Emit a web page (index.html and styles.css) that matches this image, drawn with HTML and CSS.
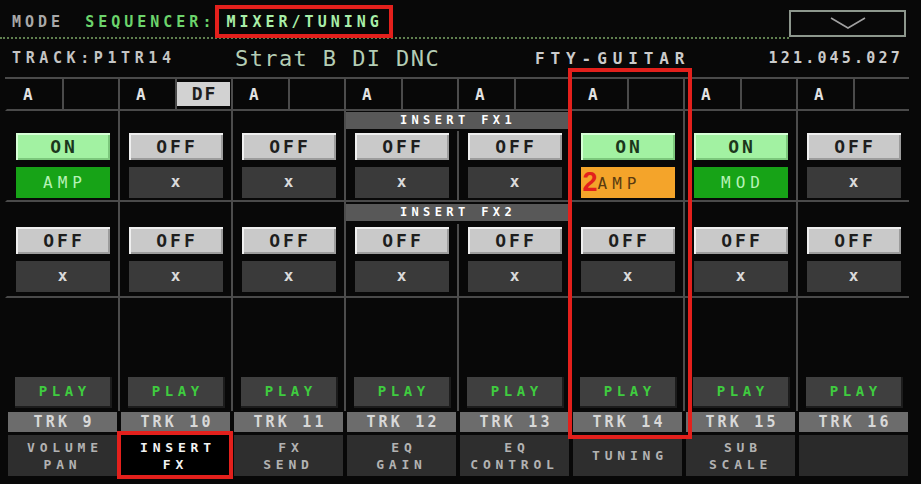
FILE: index.html
```html
<!DOCTYPE html>
<html lang="en">
<head>
    <meta charset="UTF-8">
    <meta name="viewport" content="width=device-width, initial-scale=1.0">
    <title>Mixer/Tuning - Insert FX</title>
    <link rel="stylesheet" href="styles.css">
</head>
<body>
    <div class="screen">
        <div class="mode-bar">
            <div class="mode-line">
                <span class="mode-label">MODE</span>
                <span class="mode-seq">SEQUENCER:</span>
                <span class="mode-page">MIXER/TUNING</span>
            </div>
            <div class="dropdown">
                <svg width="36" height="13" viewBox="0 0 36 13">
                    <polyline points="1,1 18,11 35,1" fill="none" stroke="#a0a0a0" stroke-width="1.6"/>
                </svg>
            </div>
        </div>
        <div class="track-bar">
            <span class="track-id">TRACK:P1TR14</span>
            <span class="track-sound">Strat B DI DNC</span>
            <span class="track-bank">FTY-GUITAR</span>
            <span class="track-num">121.045.027</span>
        </div>
        <div class="mixer" id="mixer"></div>
        <div class="trk-row" id="trk-row"></div>
        <div class="tabs">
            <div class="tab">VOLUME<br>PAN</div>
            <div class="tab active">INSERT<br>FX</div>
            <div class="tab">FX<br>SEND</div>
            <div class="tab">EQ<br>GAIN</div>
            <div class="tab">EQ<br>CONTROL</div>
            <div class="tab">TUNING</div>
            <div class="tab">SUB<br>SCALE</div>
            <div class="tab blank"></div>
        </div>
        <div class="mark mark-page"></div>
        <div class="mark mark-track"></div>
        <div class="mark mark-tab"></div>
    </div>
    <script>
        const tracks = [
            { num: 9,  df: false, fx1: ["ON",  "AMP", "green"] },
            { num: 10, df: true,  fx1: ["OFF", "x",   "empty"] },
            { num: 11, df: false, fx1: ["OFF", "x",   "empty"] },
            { num: 12, df: false, fx1: ["OFF", "x",   "empty"] },
            { num: 13, df: false, fx1: ["OFF", "x",   "empty"] },
            { num: 14, df: false, fx1: ["ON",  "AMP", "orange"], note: "2" },
            { num: 15, df: false, fx1: ["ON",  "MOD", "green"] },
            { num: 16, df: false, fx1: ["OFF", "x",   "empty"] }
        ];
        const fx2 = ["OFF", "x", "empty"];

        const mixer = document.getElementById("mixer");

        function cell(i, cls, html) {
            let d = document.createElement("div");
            d.className = "cell " + cls + (i === 0 ? " first" : "");
            d.innerHTML = html || "";
            mixer.appendChild(d);
        }

        function slot(fx, note) {
            let sw = fx[0] === "ON" ? "on" : "off";
            let label = note ? '<span class="note">' + note + '</span>' + fx[1] : fx[1];
            return '<div class="sw ' + sw + '">' + fx[0] + '</div>' +
                   '<div class="fx ' + fx[2] + '">' + label + '</div>';
        }

        function headerRow(label, cls) {
            for (let i = 0; i < 8; i++) {
                if (i === 4) continue;
                if (i === 3) {
                    cell(i, "head-cell", '<div class="fx-head ' + cls + '">' + label + '</div>');
                } else {
                    cell(i, "");
                }
            }
        }

        tracks.forEach((t, i) => {
            let mode = t.df ? '<div class="df">DF</div>' : "";
            cell(i, "a-row", '<div class="a-key">A</div><div class="a-mode">' + mode + '</div>');
        });
        headerRow("INSERT FX1", "first-head");
        tracks.forEach((t, i) => cell(i, "slot-cell", slot(t.fx1, t.note)));
        headerRow("INSERT FX2", "second-head");
        tracks.forEach((t, i) => cell(i, "slot-cell second", slot(fx2)));
        tracks.forEach((t, i) => cell(i, ""));
        tracks.forEach((t, i) => cell(i, "play-cell", '<div class="play">PLAY</div>'));

        let trkRow = document.getElementById("trk-row");
        tracks.forEach(t => {
            let d = document.createElement("div");
            d.className = "trk";
            d.innerText = "TRK " + t.num;
            trkRow.appendChild(d);
        });
    </script>
</body>
</html>
```

FILE: styles.css
```css
* {
    margin: 0;
    padding: 0;
    box-sizing: border-box;
}
body {
    background: #000;
    font-family: "DejaVu Sans Mono", "Liberation Mono", monospace;
}
.screen {
    position: relative;
    width: 921px;
    height: 484px;
    background: #080808;
    overflow: hidden;
}

/* mode bar */
.mode-bar {
    display: flex;
    height: 39px;
}
.mode-line {
    flex: 1;
    display: flex;
    padding: 13px 0 0 12px;
    border-bottom: 2px dotted #5f7f4f;
    font-size: 15px;
    font-weight: bold;
    line-height: 18px;
    letter-spacing: 4px;
}
.mode-label {
    color: #a8a8a8;
    margin-right: 21px;
}
.mode-seq {
    color: #6cd46c;
}
.mode-page {
    color: #a8eea8;
    margin-left: 11px;
}
.dropdown {
    width: 117px;
    height: 27px;
    margin: 10px 15px 0 0;
    border: 2px solid #8d978d;
    display: flex;
    align-items: center;
    justify-content: center;
}

/* track info */
.track-bar {
    display: flex;
    align-items: center;
    height: 38px;
    padding-left: 12px;
    color: #cbcbcb;
}
.track-id {
    width: 223px;
    font-size: 15px;
    font-weight: bold;
    letter-spacing: 4.6px;
    color: #c4c4c4;
}
.track-sound {
    width: 300px;
    font-size: 22px;
    letter-spacing: 1.4px;
    color: #b4cdb4;
}
.track-bank {
    font-size: 16px;
    font-weight: bold;
    letter-spacing: 5.9px;
}
.track-num {
    margin-left: auto;
    margin-right: 18px;
    font-size: 15px;
    font-weight: bold;
    letter-spacing: 3.2px;
}

/* mixer grid */
.mixer {
    display: grid;
    grid-template-columns: repeat(8, 113px);
    grid-template-rows: 32px 20px 71px 22px 74px 76px 37px;
    width: 904px;
    margin-left: 5px;
    border-top: 2px solid #4a4a4a;
}
.cell {
    border-left: 2px solid #4c4c4c;
}
.cell.first {
    border-left-color: transparent;
}
.a-row {
    display: flex;
    border-bottom: 2px solid #4a4a4a;
}
.a-key {
    width: 57px;
    padding-left: 16px;
    border-right: 2px solid #4a4a4a;
    display: flex;
    align-items: center;
    font-size: 16px;
    font-weight: bold;
    color: #e2e2e2;
}
.a-mode {
    flex: 1;
    padding: 3px 1px 3px 0;
}
.df {
    height: 100%;
    background: #d2d2d2;
    color: #1e1e1e;
    font-size: 18px;
    font-weight: bold;
    line-height: 24px;
    text-align: center;
    letter-spacing: 2px;
    text-indent: 2px;
}
.head-cell {
    grid-column: span 2;
}
.fx-head {
    height: 17px;
    background: #585858;
    color: #fff;
    font-size: 12px;
    font-weight: bold;
    line-height: 17px;
    letter-spacing: 4.4px;
    text-align: center;
}
.first-head {
    margin-top: 1px;
}
.second-head {
    margin-top: 2px;
}
.slot-cell {
    display: flex;
    flex-direction: column;
    align-items: center;
    gap: 7px;
    padding-top: 2px;
    border-bottom: 2px solid #4a4a4a;
}
.slot-cell.second {
    padding-top: 3px;
}
.sw {
    width: 94px;
    height: 27px;
    font-size: 18px;
    font-weight: bold;
    line-height: 27px;
    letter-spacing: 3px;
    text-indent: 3px;
    text-align: center;
}
.sw.on {
    background: #a2f2a2;
    color: #1c361c;
    box-shadow: inset 2px 2px 0 #d6ffd6, inset -2px -2px 0 #7cc87c;
}
.sw.off {
    background: #c9c9c9;
    color: #1e1e1e;
    box-shadow: inset 2px 2px 0 #efefef, inset -2px -2px 0 #9c9c9c;
}
.fx {
    position: relative;
    width: 94px;
    height: 31px;
    font-size: 16px;
    line-height: 31px;
    letter-spacing: 5px;
    text-indent: 5px;
    text-align: center;
}
.fx.green {
    background: #17a317;
    color: #b6f2b6;
}
.fx.orange {
    background: #f4a42a;
    color: #5a3b10;
    text-align: left;
    text-indent: 0;
    padding-left: 2px;
}
.fx.empty {
    background: #3a3a3a;
    color: #dadada;
    font-size: 16px;
    font-weight: bold;
    line-height: 29px;
}
.note {
    font-family: "Liberation Sans", sans-serif;
    font-size: 27px;
    font-weight: bold;
    letter-spacing: 0;
    color: #e3201c;
    vertical-align: -2px;
}
.play-cell {
    padding: 3px 0 3px 8px;
}
.play {
    width: 97px;
    height: 31px;
    background: #3f3f3f;
    border-right: 2px solid #1c1c1c;
    border-bottom: 2px solid #1c1c1c;
    color: #3fcc3f;
    font-size: 14px;
    font-weight: bold;
    line-height: 29px;
    letter-spacing: 4.6px;
    text-indent: 4.6px;
    text-align: center;
}

/* track labels */
.trk-row {
    display: grid;
    grid-template-columns: repeat(8, 113px);
    height: 22px;
    margin-left: 5px;
}
.trk {
    margin: 1px 1px 1px 3px;
    background: #6c6c6c;
    color: #d8d8d8;
    font-size: 15px;
    font-weight: bold;
    line-height: 20px;
    letter-spacing: 3.2px;
    text-indent: 3.2px;
    text-align: center;
}

/* bottom tabs */
.tabs {
    display: grid;
    grid-template-columns: repeat(8, 113px);
    height: 41px;
    margin: 2px 0 0 5px;
}
.tab {
    margin: 0 1px 0 3px;
    display: flex;
    align-items: center;
    justify-content: center;
    text-align: center;
    background: #2e2e2e;
    color: #b2b2b2;
    font-size: 13px;
    font-weight: bold;
    line-height: 17px;
    letter-spacing: 4.8px;
    text-indent: 4.8px;
}
.tab.active {
    background: #000;
    color: #f2f2f2;
}
.tab.blank {
    background: #2a2a2a;
}

/* red annotation boxes */
.mark {
    position: absolute;
    border: 4px solid #e3201c;
}
.mark-page {
    left: 215px;
    top: 5px;
    width: 178px;
    height: 33px;
}
.mark-track {
    left: 568px;
    top: 68px;
    width: 124px;
    height: 371px;
}
.mark-tab {
    left: 117px;
    top: 431px;
    width: 116px;
    height: 48px;
}
```
